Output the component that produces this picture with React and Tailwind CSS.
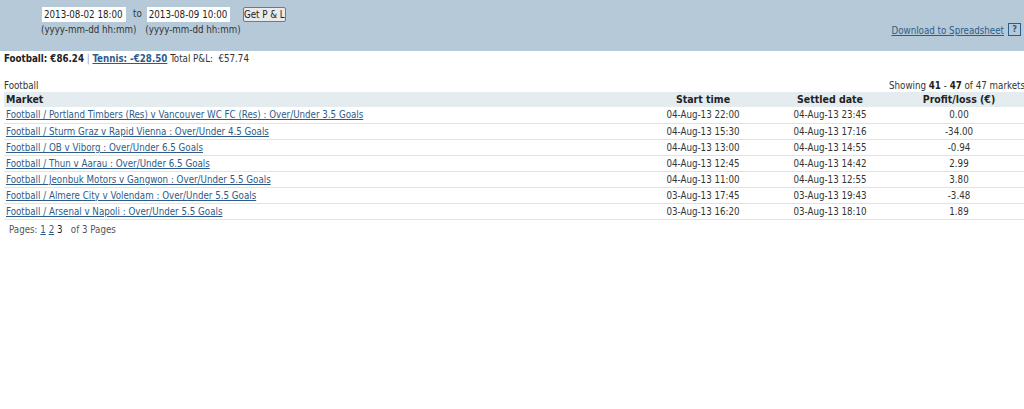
import React from "react";

const rows = [
  ["Football / Portland Timbers (Res) v Vancouver WC FC (Res) : Over/Under 3.5 Goals", "04-Aug-13 22:00", "04-Aug-13 23:45", "0.00"],
  ["Football / Sturm Graz v Rapid Vienna : Over/Under 4.5 Goals", "04-Aug-13 15:30", "04-Aug-13 17:16", "-34.00"],
  ["Football / OB v Viborg : Over/Under 6.5 Goals", "04-Aug-13 13:00", "04-Aug-13 14:55", "-0.94"],
  ["Football / Thun v Aarau : Over/Under 6.5 Goals", "04-Aug-13 12:45", "04-Aug-13 14:42", "2.99"],
  ["Football / Jeonbuk Motors v Gangwon : Over/Under 5.5 Goals", "04-Aug-13 11:00", "04-Aug-13 12:55", "3.80"],
  ["Football / Almere City v Volendam : Over/Under 5.5 Goals", "03-Aug-13 17:45", "03-Aug-13 19:43", "-3.48"],
  ["Football / Arsenal v Napoli : Over/Under 5.5 Goals", "03-Aug-13 16:20", "03-Aug-13 18:10", "1.89"],
];

export default function App() {
  return (
    <div className="w-[1024px] h-[409px] bg-white text-[9.7px] text-[#333] overflow-hidden whitespace-nowrap" style={{ fontFamily: '"DejaVu Sans Condensed", "DejaVu Sans", sans-serif' }}>
      <div className="h-[51px] bg-[#b5c9d8] flex justify-between">
        <div className="pl-[42px] pt-[7px]">
          <div className="flex items-center">
            <div className="w-[84px] h-[15px] bg-white text-[#222] pl-[2px] leading-[15px]">2013-08-02 18:00</div>
            <span className="ml-[7px] mr-[5px]">to</span>
            <div className="w-[83px] h-[15px] bg-white text-[#222] pl-[2px] leading-[15px]">2013-08-09 10:00</div>
            <div className="ml-[13px] w-[43px] h-[15px] bg-[#eaeaea] border border-[#777] rounded-[2px] text-[#222] leading-[13px] text-center">Get P &amp; L</div>
          </div>
          <div className="flex mt-[1px] text-[#333]">
            <span className="ml-[-1px]">(yyyy-mm-dd hh:mm)</span>
            <span className="ml-[9px]">(yyyy-mm-dd hh:mm)</span>
          </div>
        </div>
        <div className="flex items-start pt-[23px] pr-[3px]">
          <span className="mt-[1px] text-[#2e5c8a] underline">Download to Spreadsheet</span>
          <span className="ml-[4px] w-[13px] h-[13px] border border-[#2e5c8a] text-[#2e5c8a] font-bold text-[9px] leading-[11px] text-center">?</span>
        </div>
      </div>
      <div className="pl-[4px] mt-[1px] leading-[13px]">
        <span className="font-bold text-[#222]">Football: €86.24</span>
        <span className="text-[#999]"> | </span>
        <span className="font-bold text-[#2e5c8a] underline">Tennis: -€28.50</span>
        <span> Total P&amp;L: &nbsp;€57.74</span>
      </div>
      <div className="flex justify-between pl-[4px] mt-[14px] leading-[13px] w-[1025px]">
        <span>Football</span>
        <span>Showing <b className="text-[#222]">41</b> - <b className="text-[#222]">47</b> of 47 markets</span>
      </div>
      <table className="ml-[4px] w-[1020px] border-collapse table-fixed">
        <colgroup>
          <col className="w-[636px]" />
          <col className="w-[126px]" />
          <col className="w-[128px]" />
          <col className="w-[130px]" />
        </colgroup>
        <thead>
          <tr className="bg-[#e4ecf0] h-[15px] text-[#222]">
            <th className="text-left font-bold pl-[2px] text-[10.5px] leading-[15px] p-0">Market</th>
            <th className="font-bold text-[10.5px] leading-[15px] p-0">Start time</th>
            <th className="font-bold text-[10.5px] leading-[15px] p-0">Settled date</th>
            <th className="font-bold text-[10.5px] leading-[15px] p-0">Profit/loss (€)</th>
          </tr>
        </thead>
        <tbody>
          {rows.map((r, i) => (
            <tr key={i} className="h-[16px] border-b border-[#e2e2e2]">
              <td className="pl-[2px] leading-[15px] p-0"><span className="text-[#2e5c8a] underline">{r[0]}</span></td>
              <td className="text-center leading-[15px] p-0">{r[1]}</td>
              <td className="text-center leading-[15px] p-0">{r[2]}</td>
              <td className="text-center leading-[15px] p-0">{r[3]}</td>
            </tr>
          ))}
        </tbody>
      </table>
      <div className="pl-[9px] mt-[3px] leading-[13px] text-[#555]">
        Pages: <span className="text-[#2e5c8a] underline">1</span> <span className="text-[#2e5c8a] underline">2</span> <span className="text-[#222]">3</span> &nbsp; of 3 Pages
      </div>
    </div>
  );
}
